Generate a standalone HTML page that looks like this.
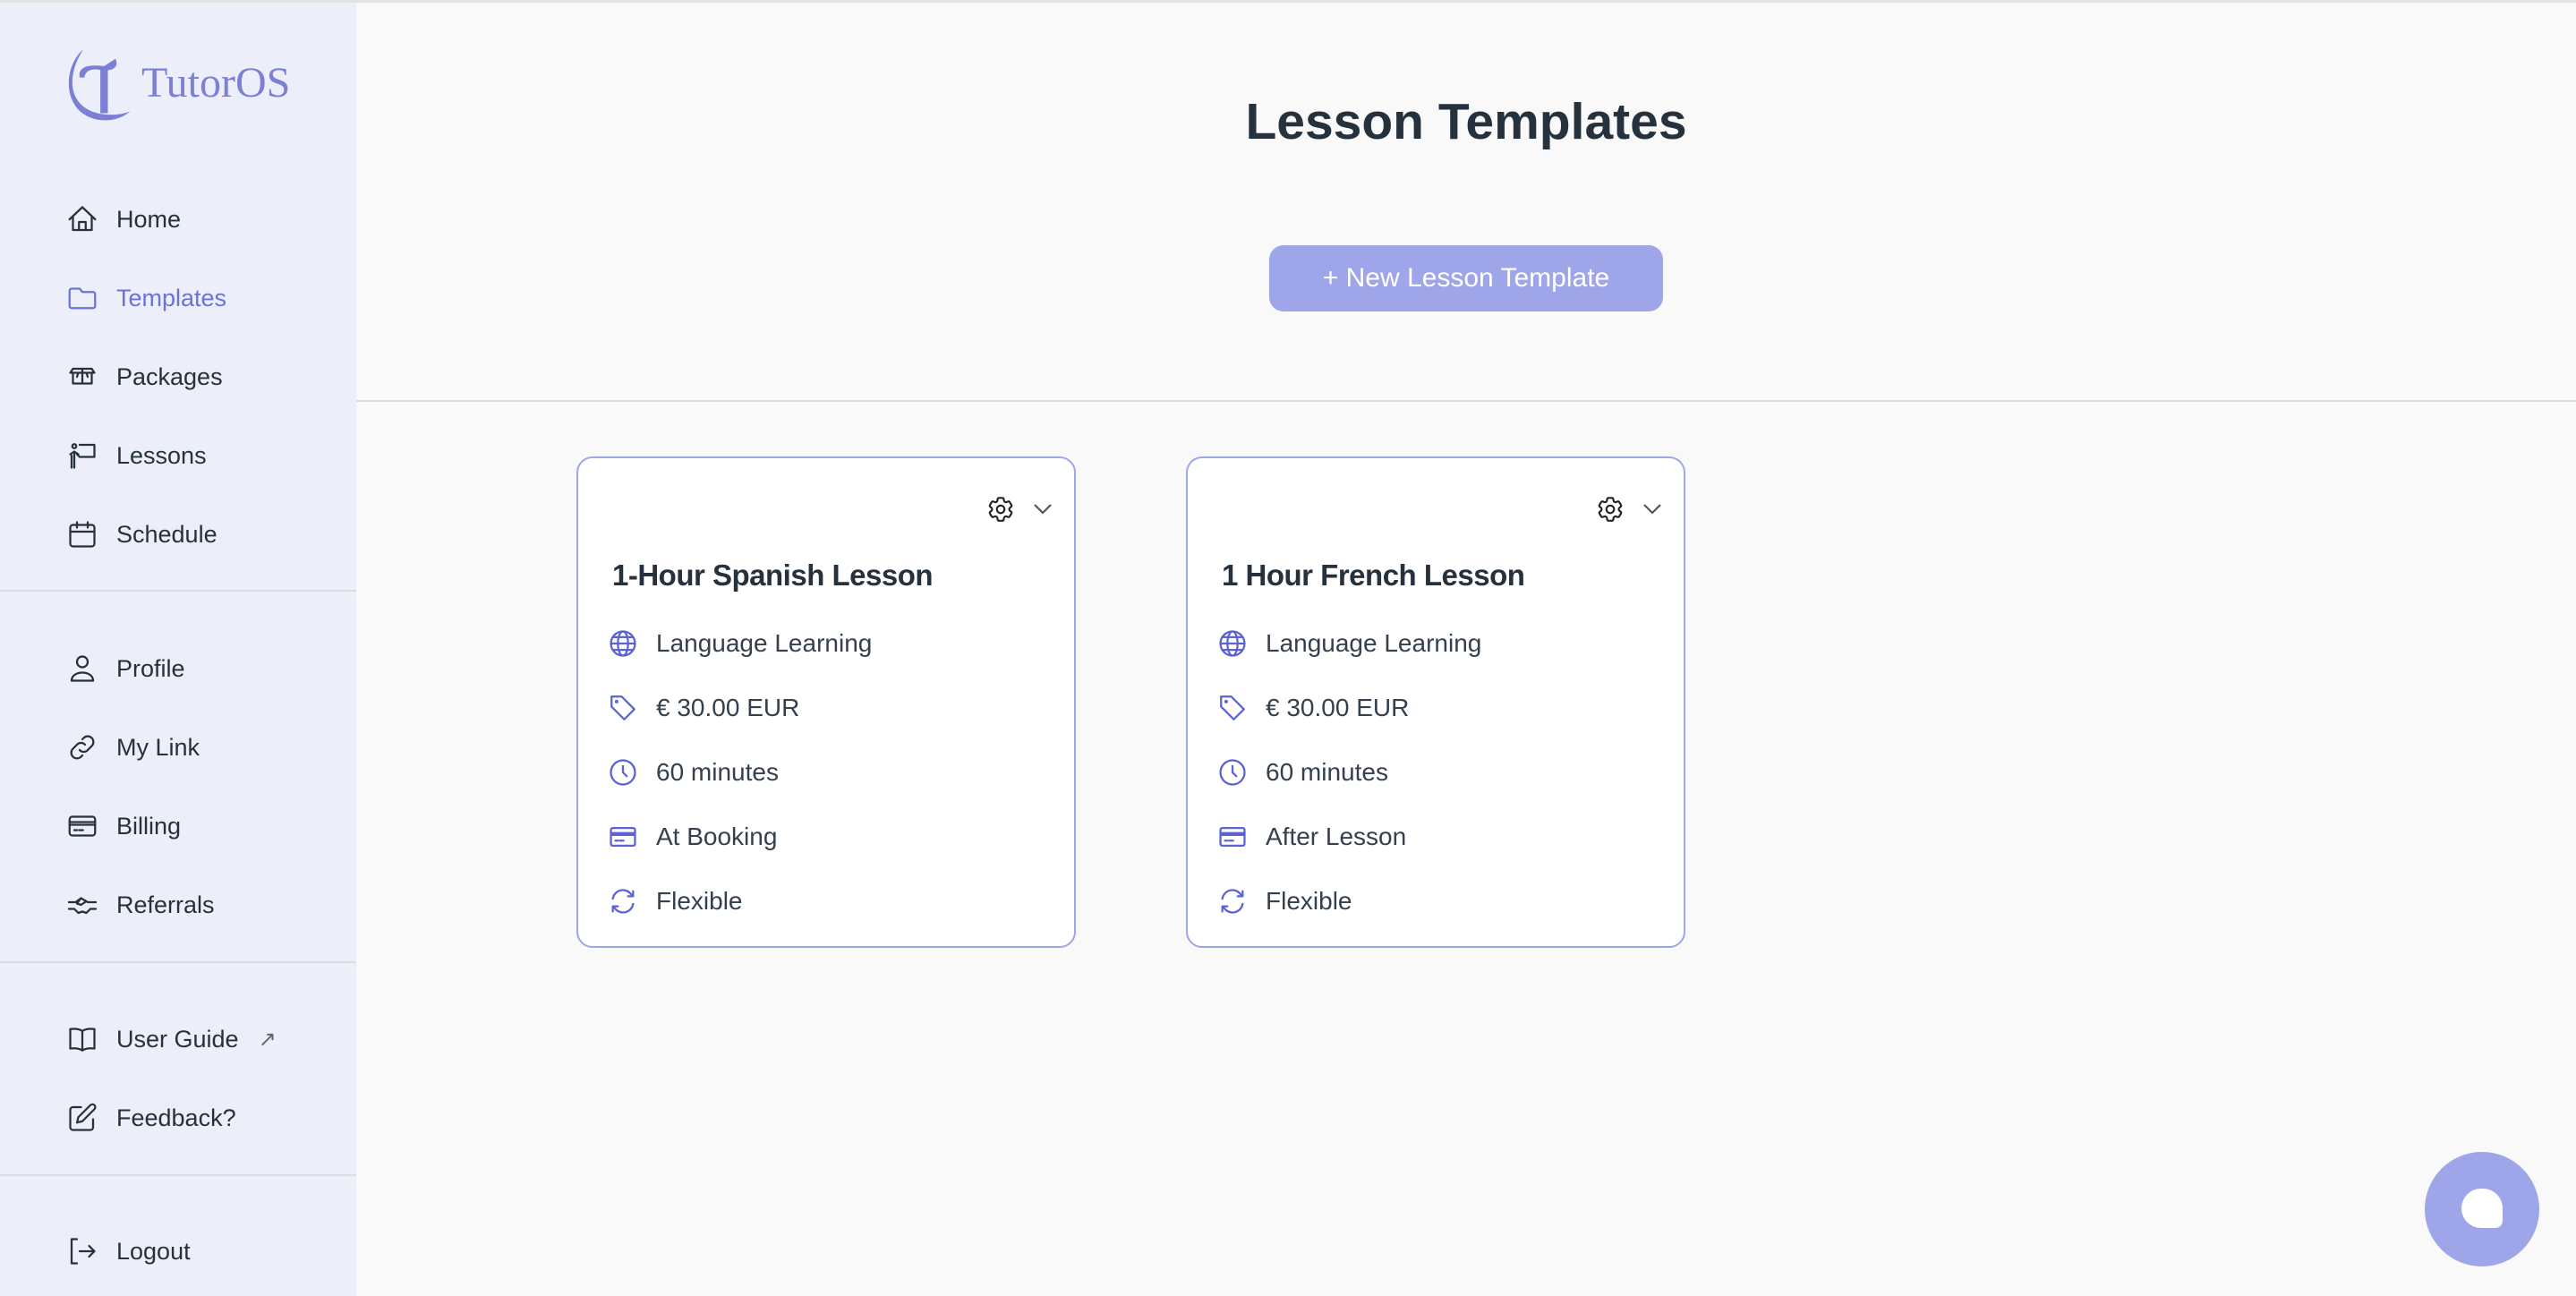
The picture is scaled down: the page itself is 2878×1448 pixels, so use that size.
<!DOCTYPE html>
<html><head><meta charset="utf-8"><style>
*{margin:0;padding:0;box-sizing:border-box}
body{width:2878px;height:1448px;overflow:hidden;background:#f9f9f9;font-family:"Liberation Sans",sans-serif;position:relative}
.topl{position:absolute;left:0;top:0;width:2878px;height:3px;background:#e2e2e2}
.side{position:absolute;left:0;top:3px;width:398px;height:1445px;background:#eceef9}
.nav{position:absolute;left:74px;display:flex;align-items:center;font-size:27px;color:#25313d;height:40px}
.nav svg{width:36px;height:36px;margin-right:20px;fill:none;stroke:#25313d;stroke-width:1.5;stroke-linecap:round;stroke-linejoin:round}
.nav.act{color:#6b72d9}.nav.act svg{stroke:#6b72d9}
.hr{position:absolute;left:0;width:398px;height:2px;background:#dcdcdf}
.card{position:absolute;top:510px;width:558px;height:549px;border:2px solid #9ea5e8;border-radius:18px;background:#fff}
.card h3{position:absolute;left:38px;top:112px;font-size:33px;font-weight:bold;color:#25313d;letter-spacing:-0.5px}
.row{position:absolute;left:33px;display:flex;align-items:center;font-size:28px;color:#35404c}
.row svg{width:34px;height:34px;margin-right:20px;fill:none;stroke:#5a62d4;stroke-width:1.6;stroke-linecap:round;stroke-linejoin:round}
.gear{position:absolute;left:455px;top:40px}
</style></head><body>
<div class="topl"></div>
<div class="side">
<svg style="position:absolute;left:68px;top:50px" width="84" height="84" viewBox="0 0 80 80"><path d="M24 2 C2 20 0 70 40 77 C55 79 65 75 74 68 C60 74 20 76 13 45 C10 30 16 14 24 2Z" fill="#7b80d6"/><path d="M20 32 C18 20 30 18 46 20 L58 12 C62 20 56 24 50 24 L50 70 L42 70 L42 24 C34 22 26 24 25 32Z" fill="#7b80d6"/></svg>
<div style="position:absolute;left:158px;top:62px;font-family:'Liberation Serif',serif;font-size:48px;color:#7b80d6">TutorOS</div>
<div class="nav" style="top:222px"><svg viewBox="0 0 24 24"><path d="M2.5 12L12 3l9.5 9M5 10v10h14V10M9.5 20v-6h5v6"/></svg>Home</div>
<div class="nav act" style="top:310px"><svg viewBox="0 0 24 24"><path d="M2.5 6.5V18a1.5 1.5 0 001.5 1.5h16a1.5 1.5 0 001.5-1.5V9A1.5 1.5 0 0020 7.5h-8L10 5H4a1.5 1.5 0 00-1.5 1.5z"/></svg>Templates</div>
<div class="nav" style="top:398px"><svg viewBox="0 0 24 24"><path d="M3 9l2-3h14l2 3H3zM5 9v8h14V9M12 6v11M9 9l-1 3M15 9l1 3"/></svg>Packages</div>
<div class="nav" style="top:486px"><svg viewBox="0 0 24 24"><circle cx="6" cy="5" r="1.5"/><path d="M3 11l3-2 3 2M6 9v12M4 21v-9M10 4h11v9H10M10 13l-2-2"/></svg>Lessons</div>
<div class="nav" style="top:574px"><svg viewBox="0 0 24 24"><rect x="3" y="5" width="18" height="16" rx="2"/><path d="M3 10h18M8 3v4M16 3v4"/></svg>Schedule</div>
<div class="hr" style="top:656px"></div>
<div class="nav" style="top:724px"><svg viewBox="0 0 24 24"><circle cx="12" cy="7" r="4"/><path d="M4 21c0-4 4-6 8-6s8 2 8 6z"/></svg>Profile</div>
<div class="nav" style="top:812px"><svg viewBox="0 0 24 24"><path d="M10 14a4 4 0 006 0l3-3a4 4 0 00-6-6l-1 1M14 10a4 4 0 00-6 0l-3 3a4 4 0 006 6l1-1"/></svg>My Link</div>
<div class="nav" style="top:900px"><svg viewBox="0 0 24 24"><rect x="2.5" y="5" width="19" height="14" rx="2"/><path d="M2.5 9h19M2.5 11h19M6 15h2M9.5 15h3"/></svg>Billing</div>
<div class="nav" style="top:988px"><svg viewBox="0 0 24 24"><path d="M2 10h5l4-3 5 3M22 10h-5M2 15h4l3 3 3-1 3 1 3-3h4M11 7l-3 4 3 1 3-2"/></svg>Referrals</div>
<div class="hr" style="top:1071px"></div>
<div class="nav" style="top:1138px"><svg viewBox="0 0 24 24"><path d="M12 6c-2-1.5-5-2-9-1.5V19c4-.5 7 0 9 1.5 2-1.5 5-2 9-1.5V4.5C17 4 14 4.5 12 6zM12 6v14.5"/></svg>User Guide<span style="margin-left:22px;font-size:24px;color:#666">↗</span></div>
<div class="nav" style="top:1226px"><svg viewBox="0 0 24 24"><path d="M11 4H5a2 2 0 00-2 2v13a2 2 0 002 2h13a2 2 0 002-2v-6M18 2.5a2 2 0 013 3L12 14.5l-4 1 1-4z"/></svg>Feedback?</div>
<div class="hr" style="top:1309px"></div>
<div class="nav" style="top:1375px"><svg viewBox="0 0 24 24"><path d="M8 3H4v18h4M10 12h11M17 8l4 4-4 4"/></svg>Logout</div>
</div>
<div style="position:absolute;left:398px;width:2480px;text-align:center;top:103px;font-size:57px;font-weight:bold;color:#25313d">Lesson Templates</div>
<div style="position:absolute;left:1418px;top:274px;width:440px;height:74px;background:#9ea5e8;border-radius:16px;color:#fff;font-size:30px;text-align:center;line-height:74px">+ New Lesson Template</div>
<div style="position:absolute;left:398px;top:447px;width:2480px;height:2px;background:#dcdcdc"></div>

<div class="card" style="left:644px">
<svg class="gear" width="34" height="34" viewBox="0 0 24 24" fill="none" stroke="#222" stroke-width="1.5"><path d="M9.594 3.94c.09-.542.56-.94 1.11-.94h2.593c.55 0 1.02.398 1.11.94l.213 1.281c.063.374.313.686.645.87.074.04.147.083.22.127.325.196.72.257 1.075.124l1.217-.456a1.125 1.125 0 0 1 1.37.49l1.296 2.247a1.125 1.125 0 0 1-.26 1.431l-1.003.827c-.293.241-.438.613-.43.992a7.723 7.723 0 0 1 0 .255c-.008.378.137.75.43.991l1.004.827c.424.35.534.955.26 1.43l-1.298 2.247a1.125 1.125 0 0 1-1.369.491l-1.217-.456c-.355-.133-.75-.072-1.076.124a6.47 6.47 0 0 1-.22.128c-.331.183-.581.495-.644.869l-.213 1.281c-.09.543-.56.94-1.110.94h-2.594c-.55 0-1.019-.398-1.11-.94l-.213-1.281c-.062-.374-.312-.686-.644-.87a6.52 6.52 0 0 1-.22-.127c-.325-.196-.72-.257-1.076-.124l-1.217.456a1.125 1.125 0 0 1-1.369-.49l-1.297-2.247a1.125 1.125 0 0 1 .26-1.431l1.004-.827c.292-.24.437-.613.43-.991a6.932 6.932 0 0 1 0-.255c.007-.38-.138-.751-.43-.992l-1.004-.827a1.125 1.125 0 0 1-.26-1.43l1.297-2.247a1.125 1.125 0 0 1 1.37-.491l1.216.456c.356.133.751.072 1.076-.124.072-.044.146-.086.22-.128.332-.183.582-.495.644-.869l.214-1.28Z"/><circle cx="12" cy="12" r="3"/></svg>
<svg style="position:absolute;left:508px;top:50px" width="22" height="14" viewBox="0 0 22 14" fill="none" stroke="#555" stroke-width="2.2"><path d="M2 2l9 9 9-9"/></svg>
<h3>1-Hour Spanish Lesson</h3>
<div class="row" style="top:190px"><svg viewBox="0 0 24 24"><circle cx="12" cy="12" r="9.5"/><ellipse cx="12" cy="12" rx="4" ry="9.5"/><path d="M2.5 12h19M4 7h16M4 17h16"/></svg>Language Learning</div>
<div class="row" style="top:262px"><svg viewBox="0 0 24 24"><path d="M3 3h8l10 10-8 8L3 11z"/><circle cx="7" cy="7" r=".6"/></svg>€ 30.00 EUR</div>
<div class="row" style="top:334px"><svg viewBox="0 0 24 24"><circle cx="12" cy="12" r="9.5"/><path d="M12 7v5l3 3"/></svg>60 minutes</div>
<div class="row" style="top:406px"><svg viewBox="0 0 24 24"><rect x="2.5" y="5" width="19" height="14" rx="1.5"/><path d="M2.5 9h19M2.5 10.5h19M6 15h2M9.5 15h3"/></svg>At Booking</div>
<div class="row" style="top:478px"><svg viewBox="0 0 24 24"><path d="M4 10a8 8 0 0114-4l2 2M20 4v4h-4M20 14a8 8 0 01-14 4l-2-2M4 20v-4h4"/></svg>Flexible</div>
</div>

<div class="card" style="left:1325px">
<svg class="gear" width="34" height="34" viewBox="0 0 24 24" fill="none" stroke="#222" stroke-width="1.5"><path d="M9.594 3.94c.09-.542.56-.94 1.11-.94h2.593c.55 0 1.02.398 1.11.94l.213 1.281c.063.374.313.686.645.87.074.04.147.083.22.127.325.196.72.257 1.075.124l1.217-.456a1.125 1.125 0 0 1 1.37.49l1.296 2.247a1.125 1.125 0 0 1-.26 1.431l-1.003.827c-.293.241-.438.613-.43.992a7.723 7.723 0 0 1 0 .255c-.008.378.137.75.43.991l1.004.827c.424.35.534.955.26 1.43l-1.298 2.247a1.125 1.125 0 0 1-1.369.491l-1.217-.456c-.355-.133-.75-.072-1.076.124a6.470 6.470 0 0 1-.22.128c-.331.183-.581.495-.644.869l-.213 1.281c-.09.543-.56.94-1.110.94h-2.594c-.55 0-1.019-.398-1.11-.94l-.213-1.281c-.062-.374-.312-.686-.644-.87a6.52 6.52 0 0 1-.22-.127c-.325-.196-.72-.257-1.076-.124l-1.217.456a1.125 1.125 0 0 1-1.369-.49l-1.297-2.247a1.125 1.125 0 0 1 .26-1.431l1.004-.827c.292-.24.437-.613.43-.991a6.932 6.932 0 0 1 0-.255c.007-.38-.138-.751-.43-.992l-1.004-.827a1.125 1.125 0 0 1-.26-1.43l1.297-2.247a1.125 1.125 0 0 1 1.37-.491l1.216.456c.356.133.751.072 1.076-.124.072-.044.146-.086.22-.128.332-.183.582-.495.644-.869l.214-1.28Z"/><circle cx="12" cy="12" r="3"/></svg>
<svg style="position:absolute;left:508px;top:50px" width="22" height="14" viewBox="0 0 22 14" fill="none" stroke="#555" stroke-width="2.2"><path d="M2 2l9 9 9-9"/></svg>
<h3>1 Hour French Lesson</h3>
<div class="row" style="top:190px"><svg viewBox="0 0 24 24"><circle cx="12" cy="12" r="9.5"/><ellipse cx="12" cy="12" rx="4" ry="9.5"/><path d="M2.5 12h19M4 7h16M4 17h16"/></svg>Language Learning</div>
<div class="row" style="top:262px"><svg viewBox="0 0 24 24"><path d="M3 3h8l10 10-8 8L3 11z"/><circle cx="7" cy="7" r=".6"/></svg>€ 30.00 EUR</div>
<div class="row" style="top:334px"><svg viewBox="0 0 24 24"><circle cx="12" cy="12" r="9.5"/><path d="M12 7v5l3 3"/></svg>60 minutes</div>
<div class="row" style="top:406px"><svg viewBox="0 0 24 24"><rect x="2.5" y="5" width="19" height="14" rx="1.5"/><path d="M2.5 9h19M2.5 10.5h19M6 15h2M9.5 15h3"/></svg>After Lesson</div>
<div class="row" style="top:478px"><svg viewBox="0 0 24 24"><path d="M4 10a8 8 0 0114-4l2 2M20 4v4h-4M20 14a8 8 0 01-14 4l-2-2M4 20v-4h4"/></svg>Flexible</div>
</div>

<div style="position:absolute;left:2709px;top:1287px;width:128px;height:128px;border-radius:50%;background:#9ea5e8"></div>
<div style="position:absolute;left:2750px;top:1328px;width:46px;height:44px;background:#fff;border-radius:22px 22px 8px 22px"></div>
</body></html>
